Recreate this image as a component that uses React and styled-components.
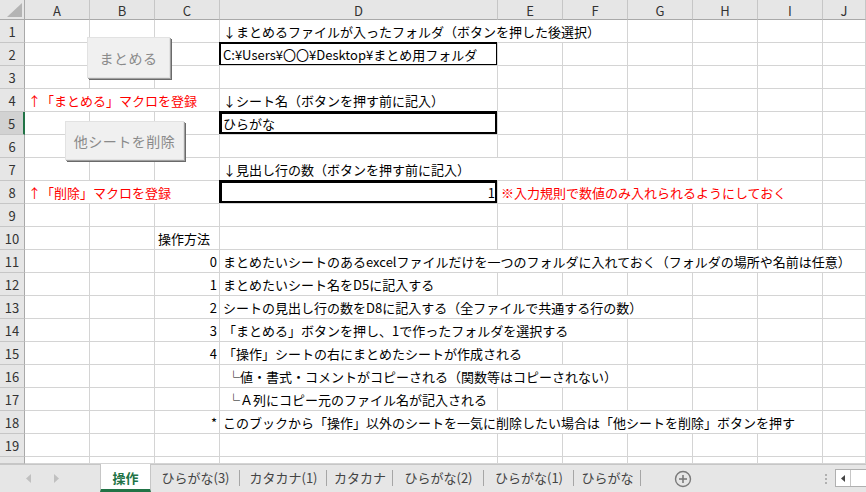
import React from "react";
import styled, { createGlobalStyle } from "styled-components";

const Global = createGlobalStyle`
  html, body { margin: 0; padding: 0; background: #fff; }
  body { width: 866px; height: 492px; overflow: hidden;
    font-family: "Noto Sans CJK JP", "Noto Sans", sans-serif; }
`;

const COLS = ["A", "B", "C", "D", "E", "F", "G", "H", "I", "J"];
const WIDTHS = [65, 65, 65, 278, 65, 65, 65, 65, 65];

const Page = styled.div`
  width: 866px;
  height: 492px;
  display: flex;
  flex-direction: column;
  overflow: hidden;
`;

const Sheet = styled.div`
  position: relative;
  height: 464px;
  overflow: hidden;
  display: grid;
  grid-template-columns: 25px ${WIDTHS.map((w) => w + "px").join(" ")} 1fr;
  grid-template-rows: 20px repeat(19, 23px) 7px;
`;

const Corner = styled.div`
  background: #e6e6e6;
  border-right: 1px solid #a9a9a9;
  border-bottom: 1px solid #a9a9a9;
  box-sizing: border-box;
  position: relative;
  svg { position: absolute; right: 2px; bottom: 2px; }
`;

const ColHead = styled.div`
  background: #e6e6e6;
  border-right: 1px solid #c6c6c6;
  border-bottom: 1px solid #a9a9a9;
  box-sizing: border-box;
  display: flex;
  align-items: center;
  justify-content: center;
  font-size: 13px;
  color: #333;
  padding-top: 1px;
`;

const RowHead = styled.div`
  background: ${(p) => (p.$active ? "#d2d2d2" : "#e6e6e6")};
  border-right: ${(p) => (p.$active ? "2px solid #217346" : "1px solid #a9a9a9")};
  border-bottom: 1px solid #c6c6c6;
  box-sizing: border-box;
  display: flex;
  align-items: center;
  justify-content: center;
  font-size: 13px;
  color: #333;
  overflow: hidden;
`;

const Cell = styled.div`
  grid-column: span ${(p) => p.$span || 1};
  border-right: 1px solid #d4d4d4;
  border-bottom: 1px solid #d4d4d4;
  box-sizing: border-box;
  display: flex;
  align-items: center;
  justify-content: ${(p) => (p.$align === "right" ? "flex-end" : "flex-start")};
  padding: 1px 2px 0 ${(p) => (p.$indent ? 7 : 3)}px;
  font-size: 13px;
  color: ${(p) => (p.$red ? "#ff0000" : "#000")};
  white-space: nowrap;
  overflow: hidden;
  box-shadow: ${(p) =>
    p.$box === "thin"
      ? "inset 1px 1px 0 #000, inset -1px -1px 0 #000, -1px -1px 0 #000"
      : p.$box === "thick"
      ? "inset 0 0 0 2px #000, -1px -1px 0 #000"
      : "none"};
  position: relative;
`;

const MacroButton = styled.div`
  position: absolute;
  left: ${(p) => p.$x}px;
  top: ${(p) => p.$y}px;
  width: ${(p) => p.$w}px;
  height: ${(p) => p.$h}px;
  box-sizing: border-box;
  background: #f0f0f0;
  border: 1px solid #e2e2e2;
  box-shadow: 1px 1px 0 #a0a0a0, 2px 2px 0 #6a6a6a;
  display: flex;
  align-items: center;
  justify-content: center;
  font-size: 14px;
  color: #8a8a8a;
  letter-spacing: 0.5px;
  z-index: 2;
`;

const TabBar = styled.div`
  height: 28px;
  background: #e6e6e6;
  border-top: 1px solid #c6c6c6;
  box-sizing: border-box;
  display: flex;
  align-items: stretch;
  position: relative;
`;

const Nav = styled.div`
  width: 100px;
  display: flex;
  align-items: center;
  padding-left: 26px;
  gap: 21px;
  box-sizing: border-box;
`;

const Tab = styled.div`
  width: ${(p) => p.$w}px;
  box-sizing: border-box;
  display: flex;
  align-items: center;
  justify-content: center;
  font-size: 13px;
  color: ${(p) => (p.$active ? "#217346" : "#444")};
  font-weight: ${(p) => (p.$active ? 700 : 400)};
  background: ${(p) => (p.$active ? "#fff" : "transparent")};
  margin-top: ${(p) => (p.$active ? "-1px" : "0")};
  border-left: ${(p) => (p.$active ? "1px solid #c6c6c6" : "none")};
  border-right: ${(p) => (p.$active ? "1px solid #c6c6c6" : "none")};
  border-bottom: ${(p) => (p.$active ? "3px solid #217346" : "3px solid transparent")};
  padding-top: 1px;
  position: relative;
  &::after {
    content: "";
    display: ${(p) => (p.$sep ? "block" : "none")};
    position: absolute;
    right: 0;
    top: 5px;
    bottom: 3px;
    width: 1px;
    background: #a6a6a6;
  }
`;

const AddBtn = styled.div`
  width: 84px;
  display: flex;
  align-items: center;
  justify-content: center;
`;

const Spacer = styled.div`
  flex: 1;
`;

const Dots = styled.div`
  width: 14px;
  display: flex;
  flex-direction: column;
  align-items: center;
  justify-content: center;
  gap: 2px;
  margin-right: 2px;
  span { width: 2px; height: 2px; background: #b0b0b0; }
`;

const Scroll = styled.div`
  width: 31px;
  margin: 4px 0 5px 0;
  background: #fff;
  border: 1px solid #b0b0b0;
  border-right: none;
  box-sizing: border-box;
  display: flex;
  align-items: center;
`;

const ScrollArrow = styled.div`
  width: 14px;
  height: 100%;
  border-right: 1px solid #c6c6c6;
  display: flex;
  align-items: center;
  justify-content: center;
`;

const rows = {
  1: [{ c: 3, span: 3, t: "↓まとめるファイルが入ったフォルダ（ボタンを押した後選択）" }],
  2: [{ c: 3, t: "C:¥Users¥〇〇¥Desktop¥まとめ用フォルダ", box: "thin" }],
  4: [
    { c: 0, span: 3, t: "↑「まとめる」マクロを登録", red: true },
    { c: 3, t: "↓シート名（ボタンを押す前に記入）" },
  ],
  5: [{ c: 3, t: "ひらがな", box: "thick" }],
  7: [{ c: 3, span: 2, t: "↓見出し行の数（ボタンを押す前に記入）" }],
  8: [
    { c: 0, span: 3, t: "↑「削除」マクロを登録", red: true },
    { c: 3, t: "1", align: "right", box: "thick" },
    { c: 4, span: 5, t: "※入力規則で数値のみ入れられるようにしておく", red: true },
  ],
  10: [{ c: 2, t: "操作方法" }],
  11: [
    { c: 2, t: "0", align: "right" },
    { c: 3, span: 7, t: "まとめたいシートのあるexcelファイルだけを一つのフォルダに入れておく（フォルダの場所や名前は任意）" },
  ],
  12: [
    { c: 2, t: "1", align: "right" },
    { c: 3, t: "まとめたいシート名をD5に記入する" },
  ],
  13: [
    { c: 2, t: "2", align: "right" },
    { c: 3, span: 4, t: "シートの見出し行の数をD8に記入する（全ファイルで共通する行の数）" },
  ],
  14: [
    { c: 2, t: "3", align: "right" },
    { c: 3, span: 3, t: "「まとめる」ボタンを押し、1で作ったフォルダを選択する" },
  ],
  15: [
    { c: 2, t: "4", align: "right" },
    { c: 3, span: 2, t: "「操作」シートの右にまとめたシートが作成される" },
  ],
  16: [{ c: 3, span: 3, t: "└値・書式・コメントがコピーされる（関数等はコピーされない）", indent: true }],
  17: [{ c: 3, span: 1, t: "└Ａ列にコピー元のファイル名が記入される", indent: true }],
  18: [
    { c: 2, t: "*", align: "right" },
    { c: 3, span: 6, t: "このブックから「操作」以外のシートを一気に削除したい場合は「他シートを削除」ボタンを押す" },
  ],
};

function renderRow(r) {
  const defs = rows[r] || [];
  const out = [];
  let c = 0;
  while (c < COLS.length) {
    const d = defs.find((x) => x.c === c);
    if (d) {
      out.push(
        <Cell
          key={`${r}-${c}`}
          $span={d.span}
          $align={d.align}
          $red={d.red}
          $box={d.box}
          $indent={d.indent}
        >
          {d.t}
        </Cell>
      );
      c += d.span || 1;
    } else {
      out.push(<Cell key={`${r}-${c}`} />);
      c += 1;
    }
  }
  return out;
}

const tabs = [
  { t: "操作", w: 51, active: true },
  { t: "ひらがな(3)", w: 89, sep: true },
  { t: "カタカナ(1)", w: 87, sep: true },
  { t: "カタカナ", w: 66, sep: true },
  { t: "ひらがな(2)", w: 91, sep: true },
  { t: "ひらがな(1)", w: 90, sep: true },
  { t: "ひらがな", w: 67, sep: true },
];

export default function App() {
  const rowNums = Array.from({ length: 20 }, (_, i) => i + 1);
  return (
    <Page>
      <Global />
      <Sheet>
        <Corner>
          <svg width="15" height="14" viewBox="0 0 15 14">
            <polygon points="15,0 15,14 0,14" fill="#b4b4b4" />
          </svg>
        </Corner>
        {COLS.map((c) => (
          <ColHead key={c}>{c}</ColHead>
        ))}
        {rowNums.map((r) => (
          <React.Fragment key={r}>
            <RowHead $active={r === 5}>{r <= 19 ? r : ""}</RowHead>
            {renderRow(r)}
          </React.Fragment>
        ))}
        <MacroButton $x={87} $y={37} $w={83} $h={41}>まとめる</MacroButton>
        <MacroButton $x={65} $y={121} $w={119} $h={39}>他シートを削除</MacroButton>
      </Sheet>
      <TabBar>
        <Nav>
          <svg width="6" height="9" viewBox="0 0 6 9">
            <polygon points="5,0 5,9 0,4.5" fill="#c0c0c0" />
          </svg>
          <svg width="6" height="9" viewBox="0 0 6 9">
            <polygon points="1,0 1,9 6,4.5" fill="#c0c0c0" />
          </svg>
        </Nav>
        {tabs.map((t) => (
          <Tab key={t.t} $w={t.w} $active={t.active} $sep={t.sep}>
            {t.t}
          </Tab>
        ))}
        <AddBtn>
          <svg width="18" height="18" viewBox="0 0 18 18">
            <circle cx="9" cy="9" r="7.5" fill="none" stroke="#7a7a7a" strokeWidth="1.4" />
            <line x1="9" y1="5" x2="9" y2="13" stroke="#7a7a7a" strokeWidth="1.6" />
            <line x1="5" y1="9" x2="13" y2="9" stroke="#7a7a7a" strokeWidth="1.6" />
          </svg>
        </AddBtn>
        <Spacer />
        <Dots>
          <span />
          <span />
          <span />
        </Dots>
        <Scroll>
          <ScrollArrow>
            <svg width="4" height="7" viewBox="0 0 4 7">
              <polygon points="4,0 4,7 0,3.5" fill="#444" />
            </svg>
          </ScrollArrow>
        </Scroll>
      </TabBar>
    </Page>
  );
}
